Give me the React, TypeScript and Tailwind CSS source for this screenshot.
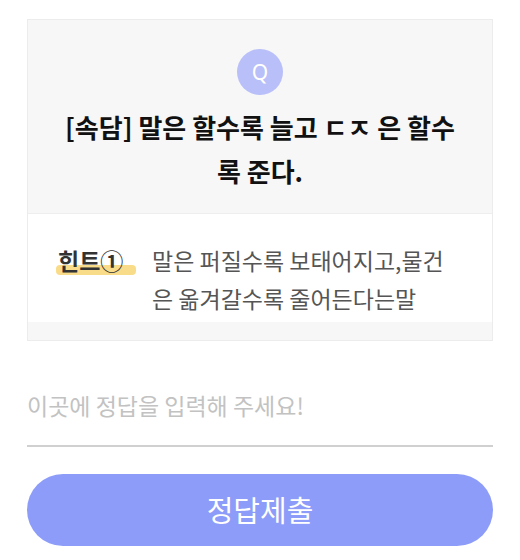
import React, { useState } from 'react';

export default function App() {
  const [answer, setAnswer] = useState('');

  return (
    <div className="w-[520px] h-[560px] bg-white px-[27px] pt-[19px] font-['Noto_Sans_CJK_KR','Noto_Sans',sans-serif]">
      {/* Quiz card */}
      <div className="border border-[#ececec] overflow-hidden">
        <div className="bg-[#f7f7f7] pt-[29px] pb-[20px] px-[31px] flex flex-col items-center border-b border-[#eeeeee]">
          <div className="w-[46px] h-[46px] rounded-full bg-[#b9bff8] flex items-center justify-center">
            <span className="text-white text-[21px] leading-none font-['Noto_Sans',sans-serif]">Q</span>
          </div>
          <h2 className="mt-[10px] text-center text-[26px] leading-[44px] font-bold text-[#111] break-all">
            [속담] 말은 할수록 늘고 ㄷㅈ 은 할수록 준다.
          </h2>
        </div>
        <div className="bg-white pt-[27px] pb-[5px] pl-[30px] flex">
          <div className="relative shrink-0 w-[94px] h-[38px]">
            <span className="absolute left-[-2px] top-[24px] w-[80px] h-[10px] rounded-sm bg-[#f9dc8a]" />
            <span className="relative text-[23px] leading-[38px] font-semibold text-[#333]">힌트①</span>
          </div>
          <p className="w-[308px] text-[23px] leading-[38px] text-[#555] break-all">
            말은 퍼질수록 보태어지고,물건은 옮겨갈수록 줄어든다는말
          </p>
        </div>
        <div className="h-[18px] bg-[#f7f7f7]" />
      </div>

      {/* Answer input */}
      <div className="mt-[40px] pb-[16px] border-b-2 border-[#d0d0d0]">
        <input
          value={answer}
          onChange={(e) => setAnswer(e.target.value)}
          placeholder="이곳에 정답을 입력해 주세요!"
          className="w-full h-12 text-[23px] text-[#333] placeholder:text-[#c2c2c2] outline-none bg-transparent"
        />
      </div>

      <button className="mt-[27px] w-full h-[72px] rounded-full bg-[#8c9cf8] text-white text-[29px]">
        정답제출
      </button>
    </div>
  );
}
